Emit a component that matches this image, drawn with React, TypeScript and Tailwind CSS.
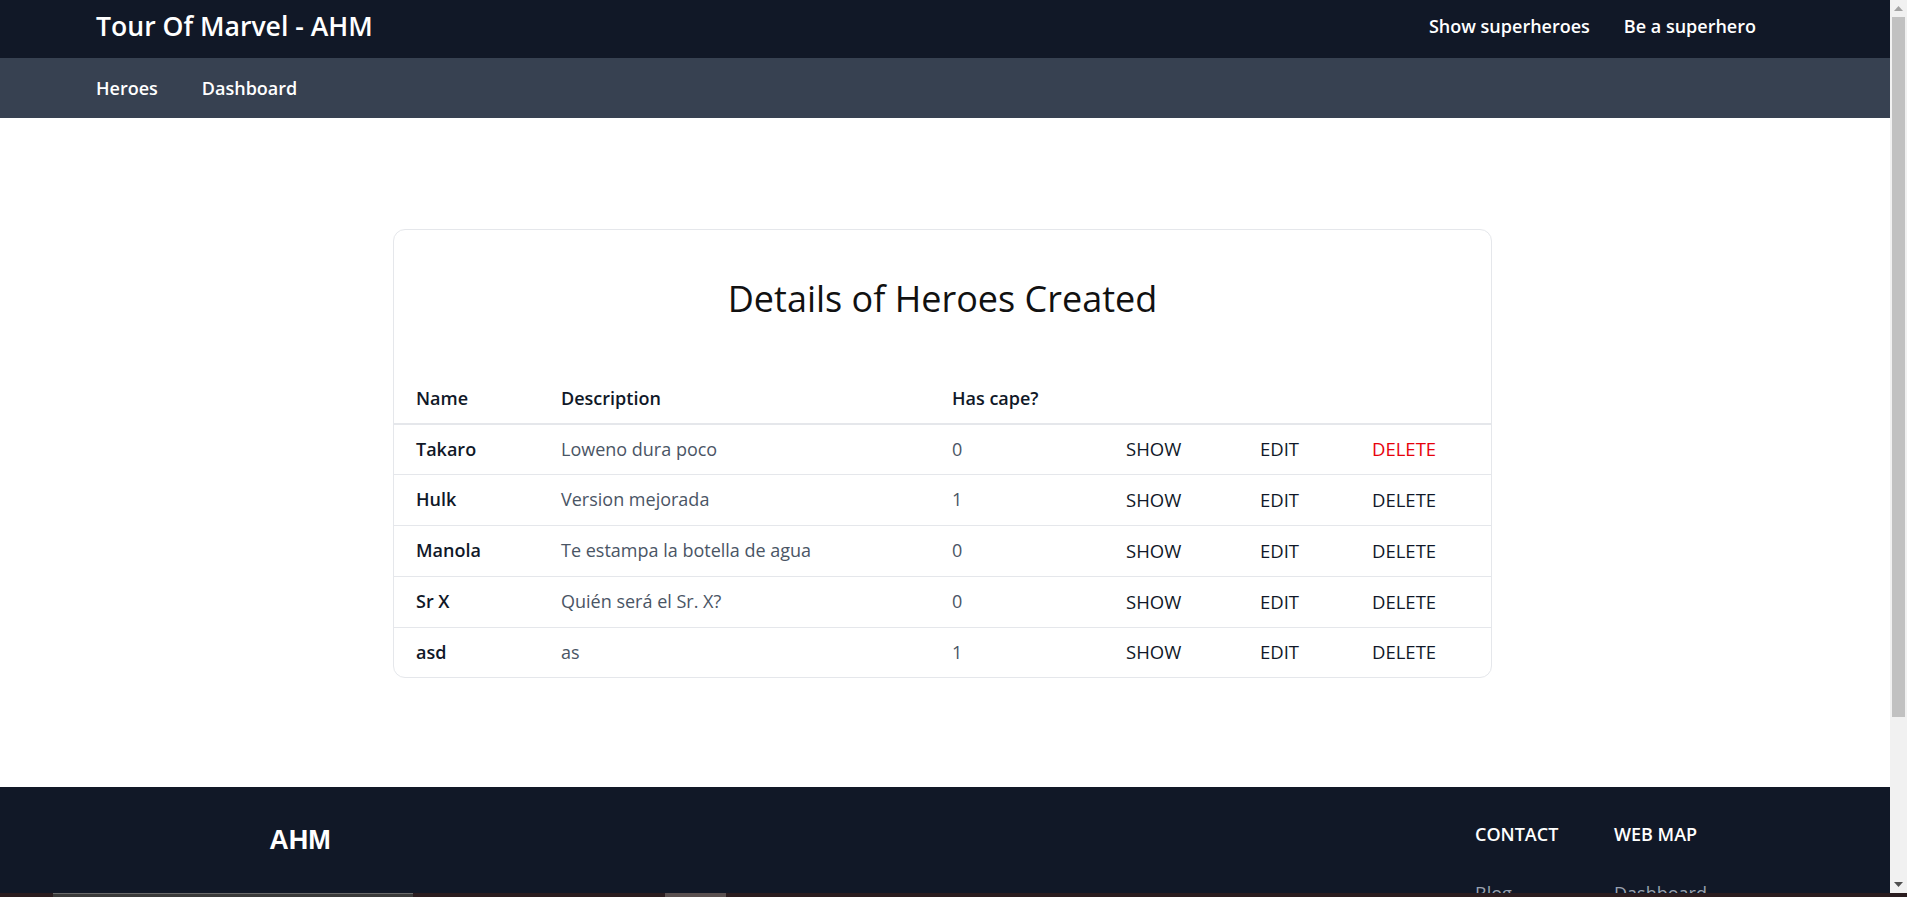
import React from "react";

const heroes = [
  { name: "Takaro", description: "Loweno dura poco", cape: 0 },
  { name: "Hulk", description: "Version mejorada", cape: 1 },
  { name: "Manola", description: "Te estampa la botella de agua", cape: 0 },
  { name: "Sr X", description: "Quién será el Sr. X?", cape: 0 },
  { name: "asd", description: "as", cape: 1 },
];

const Navbar = () => (
  <header>
    <div className="flex h-[58px] items-center justify-between bg-[#111827] pb-[5px] pl-[96px] pr-[134px] text-white">
      <a href="#" className="text-[26.6px] font-semibold">
        Tour Of Marvel - AHM
      </a>
      <nav className="flex items-center gap-[34px] text-[18px] font-semibold">
        <a href="#">Show superheroes</a>
        <a href="#">Be a superhero</a>
      </nav>
    </div>
    <div className="flex h-[60px] items-center gap-[44px] bg-[#374151] pl-[96px] text-[18px] font-semibold text-white">
      <a href="#">Heroes</a>
      <a href="#">Dashboard</a>
    </div>
  </header>
);

const HeroesTable = () => (
  <div className="mx-auto w-[1099px] overflow-hidden rounded-xl border border-gray-200 bg-white">
    <h1 className="pt-[45px] pb-[51px] text-center text-[36px] leading-[48px] text-[#111111]">
      Details of Heroes Created
    </h1>
    <table className="w-full table-fixed text-left text-[18px]">
      <thead>
        <tr className="h-[50px] border-b-2 border-gray-200 font-semibold text-gray-900">
          <th className="w-[145px] pl-[22px] pr-6 font-semibold">Name</th>
          <th className="w-[391px] pl-[22px] pr-6 font-semibold">Description</th>
          <th className="w-[174px] pl-[22px] pr-6 font-semibold">Has cape?</th>
          <th className="w-[134px] pl-[22px] pr-6"></th>
          <th className="w-[112px] pl-[22px] pr-6"></th>
          <th className="pl-[22px] pr-6"></th>
        </tr>
      </thead>
      <tbody>
        {heroes.map((hero, i) => (
          <tr
            key={hero.name}
            className={
              i === 0
                ? "h-[50px]"
                : i === heroes.length - 1
                  ? "h-[50px] border-t border-gray-200"
                  : "h-[51px] border-t border-gray-200"
            }
          >
            <td className="pl-[22px] pr-6 font-semibold text-gray-900">{hero.name}</td>
            <td className="pl-[22px] pr-6 text-gray-600">{hero.description}</td>
            <td className="pl-[22px] pr-6 text-gray-600">{hero.cape}</td>
            <td className="pl-[22px] pr-6 text-[18.5px] font-medium text-gray-900">SHOW</td>
            <td className="pl-[22px] pr-6 text-[18.5px] font-medium text-gray-900">EDIT</td>
            <td
              className={
                i === 0
                  ? "pl-[22px] pr-6 text-[18.5px] font-medium text-red-600"
                  : "pl-[22px] pr-6 text-[18.5px] font-medium text-gray-900"
              }
            >
              DELETE
            </td>
          </tr>
        ))}
      </tbody>
    </table>
  </div>
);

const Footer = () => (
  <footer className="bg-[#111827] pb-16 pl-[96px] pr-[137px] pt-[33px] text-white">
    <div className="flex justify-between">
      <div className="w-[408px] text-center">
        <span className="font-['Liberation_Sans',Arial,sans-serif] text-[27px] font-semibold leading-[40px]">
          AHM
        </span>
      </div>
      <div className="flex">
        <div className="w-[139px]">
          <h2 className="mb-8 text-[18px] font-semibold leading-[28px]">CONTACT</h2>
          <ul className="space-y-4 text-[18px] text-gray-400">
            <li>Blog</li>
            <li>Contact</li>
            <li>About</li>
          </ul>
        </div>
        <div className="w-[139px]">
          <h2 className="mb-8 text-[18px] font-semibold leading-[28px]">WEB MAP</h2>
          <ul className="space-y-4 text-[18px] text-gray-400">
            <li>Dashboard</li>
            <li>Heroes</li>
            <li>Create</li>
          </ul>
        </div>
      </div>
    </div>
    <p className="mt-12 text-center text-[15px] text-gray-500">© 2023 AHM. All Rights Reserved.</p>
  </footer>
);

const Scrollbar = () => (
  <div className="flex w-[17px] shrink-0 flex-col bg-[#f1f1f1]">
    <div className="flex h-[17px] items-center justify-center">
      <svg width="9" height="5" viewBox="0 0 9 5">
        <path d="M4.5 0 L9 5 L0 5 Z" fill="#a3a3a3" />
      </svg>
    </div>
    <div className="mx-[2px] h-[700px] bg-[#c1c1c1]" />
    <div className="flex-1" />
    <div className="flex h-[17px] items-center justify-center">
      <svg width="9" height="5" viewBox="0 0 9 5">
        <path d="M0 0 L9 0 L4.5 5 Z" fill="#505050" />
      </svg>
    </div>
  </div>
);

export default function App() {
  return (
    <div className="flex h-screen flex-col overflow-hidden bg-[#2a1c1f] font-['Open_Sans','Noto_Sans',sans-serif]">
      <div className="flex min-h-0 flex-1">
        <div className="min-w-0 flex-1 overflow-hidden bg-white">
          <Navbar />
          <main className="pb-[109px] pr-[5px] pt-[111px]">
            <HeroesTable />
          </main>
          <Footer />
        </div>
        <Scrollbar />
      </div>
      <div className="flex h-[4px] shrink-0">
        <div className="ml-[53px] w-[360px] border-t border-[#6a6a6a] bg-[#3a3a3a]" />
        <div className="ml-[252px] w-[61px] bg-[#5a5050]" />
      </div>
    </div>
  );
}
